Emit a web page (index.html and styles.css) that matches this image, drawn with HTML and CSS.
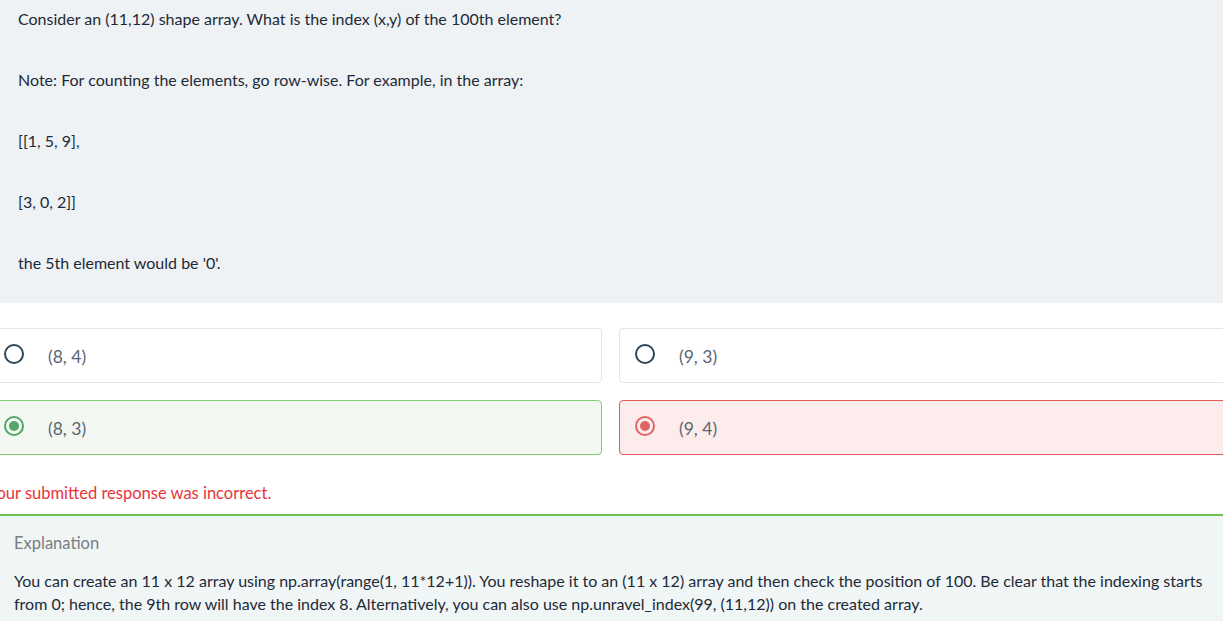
FILE: index.html
```html
<!DOCTYPE html>
<html>
<head>
<meta charset="utf-8">
<link rel="stylesheet" href="styles.css">
</head>
<body>
<div class="page">
  <section class="question">
    <p>Consider an (11,12) shape array. What is the index (x,y) of the 100th element?</p>
    <p>Note: For counting the elements, go row-wise. For example, in the array:</p>
    <p>[[1, 5, 9],</p>
    <p>[3, 0, 2]]</p>
    <p>the 5th element would be '0'.</p>
  </section>
  <div class="options">
    <div class="option">
      <span class="radio"></span><span class="label">(8, 4)</span>
    </div>
    <div class="option">
      <span class="radio"></span><span class="label">(9, 3)</span>
    </div>
    <div class="option correct">
      <span class="radio"></span><span class="label">(8, 3)</span>
    </div>
    <div class="option wrong">
      <span class="radio"></span><span class="label">(9, 4)</span>
    </div>
  </div>
  <p class="result">Your submitted response was incorrect.</p>
  <section class="explanation">
    <div class="exp-title">Explanation</div>
    <p class="exp-text">You can create an 11 x 12 array using np.array(range(1, 11*12+1)). You reshape it to an (11 x 12) array and then check the position of 100. Be clear that the indexing starts from 0; hence, the 9th row will have the index 8. Alternatively, you can also use np.unravel_index(99, (11,12)) on the created array.</p>
  </section>
</div>
</body>
</html>
```

FILE: styles.css
```css
html, body {
  margin: 0;
  padding: 0;
  background: #ffffff;
  overflow: hidden;
}
body {
  font-family: Lato, "Open Sans", sans-serif;
  font-size: 16px;
  color: #1e2a36;
  width: 1223px;
  height: 621px;
}
.page {
  margin-left: -12px;
  width: 1245px;
}
.question {
  background: #eef2f5;
  margin-left: 12px;
  padding: 8px 0 30px 18px;
}
.question p {
  margin: 0 0 40px;
  line-height: 21px;
}
.question p:last-child {
  margin-bottom: 0;
}
.options {
  display: grid;
  grid-template-columns: 1fr 1fr;
  gap: 17px;
  margin-top: 25px;
}
.option {
  display: flex;
  align-items: center;
  height: 55px;
  box-sizing: border-box;
  border: 1px solid #e3e5e7;
  border-radius: 4px;
  padding-left: 15px;
  background: #ffffff;
}
.radio {
  width: 20px;
  height: 20px;
  box-sizing: border-box;
  border: 2px solid #2e4556;
  border-radius: 50%;
  margin-top: -3px;
  position: relative;
  flex: none;
}
.label {
  margin-left: 24px;
  color: #5b6573;
  font-size: 17.5px;
  margin-top: 2px;
}
.correct {
  border-color: #82cc74;
  background: #f2f8f1;
}
.correct .radio {
  border-color: #4ea565;
}
.correct .radio::after,
.wrong .radio::after {
  content: "";
  position: absolute;
  left: 3px;
  top: 3px;
  width: 10px;
  height: 10px;
  border-radius: 50%;
  background: #57a56b;
}
.wrong {
  border-color: #e65a5a;
  background: #fdecec;
}
.wrong .radio {
  border-color: #e06464;
}
.wrong .radio::after {
  background: #e06464;
}
.result {
  margin: 28px 0 0;
  line-height: 20px;
  color: #e5353b;
  font-size: 16.5px;
  height: 31px;
}
.explanation {
  margin-left: 12px;
  border-top: 2px solid #6cc34f;
  background: #f0f5f6;
  padding: 17px 18px 20px 14px;
}
.exp-title {
  color: #7a7d80;
  font-size: 16.5px;
  line-height: 20px;
  margin-bottom: 16px;
}
.exp-text {
  margin: 0;
  font-size: 16px;
  line-height: 23px;
}
```
